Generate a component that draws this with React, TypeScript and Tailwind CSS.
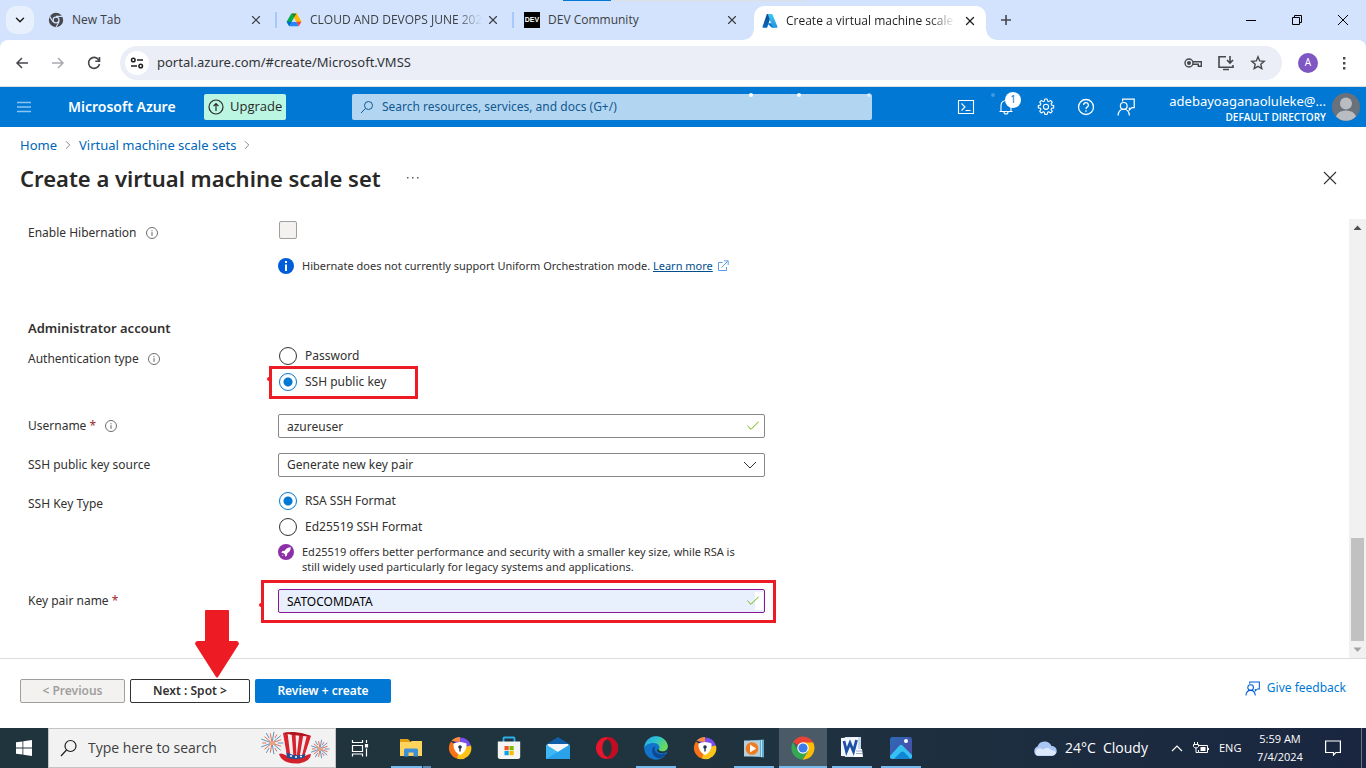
import type { ReactNode } from "react";
import { Check, ChevronDown, ChevronRight, X } from "lucide-react";

const tabs = [
  { title: "New Tab", icon: <ChromeMono />, style: "w-[229px] border-r-2" },
  { title: "CLOUD AND DEVOPS JUNE 2024", icon: <DriveLogo />, style: "w-[237px] border-r-2 pl-[9px]" },
  { title: "DEV Community", icon: <DevLogo />, style: "w-[237px] pl-[10px]" },
];

const taskbarApps = [
  { name: "File Explorer", icon: <FolderIcon />, state: "stacked" },
  { name: "Secure Browser", icon: <SecureIcon />, state: "closed" },
  { name: "Microsoft Store", icon: <StoreIcon />, state: "closed" },
  { name: "Mail", icon: <MailIcon />, state: "closed" },
  { name: "Opera", icon: <OperaIcon />, state: "closed" },
  { name: "Edge", icon: <EdgeIcon />, state: "open" },
  { name: "Secure Browser 2", icon: <SecureIcon />, state: "closed" },
  { name: "Media Player", icon: <MediaIcon />, state: "open" },
  { name: "Chrome", icon: <ChromeIcon />, state: "active" },
  { name: "Word", icon: <WordIcon />, state: "open" },
  { name: "Photos", icon: <PhotosIcon />, state: "open" },
];

function ChromeMono() {
  return (
    <svg viewBox="0 0 16 16" className="size-4">
      <circle cx="8" cy="8" r="7.2" fill="#45484c" />
      <circle cx="8" cy="8" r="3.6" fill="#d3e3fd" />
      <circle cx="8" cy="8" r="2.3" fill="#45484c" />
      <path d="M8 4.4h6.4M4.9 9.8 1.7 4.4M11.1 9.8 7.9 15.2" stroke="#d3e3fd" strokeWidth="1.1" />
    </svg>
  );
}

function DriveLogo() {
  return (
    <svg viewBox="0 0 16 16" className="size-4">
      <path d="M10.6 1.5 15.4 9.8h-5.2L5.4 1.5z" fill="#ffba00" />
      <path d="M5.4 1.5h5.2L8 6z" fill="#188038" />
      <path d="M5.4 1.5 8 6l-2.2 3.8L3.3 14.2.6 9.8z" fill="#00ac47" />
      <path d="M8 6l2.600-4.500L15.400 9.800h-5.200z" fill="#ffba00" />
      <path d="M.6 9.8h5.2l-2.5 4.4z" fill="#0066da" />
      <path d="M5.8 9.8h4.400l2.500 4.400H3.300z" fill="#2684fc" />
      <path d="M10.2 9.8h5.200l-2.700 4.400z" fill="#ea4335" />
      <path d="M5.8 9.8 8 6l2.200 3.800z" fill="#d3e3fd" />
    </svg>
  );
}

function DevLogo() {
  return (
    <span className="grid size-4 place-items-center bg-black font-['Liberation_Sans',sans-serif] text-[7px] font-bold text-white">
      DEV
    </span>
  );
}

function AzureLogo() {
  return (
    <svg viewBox="0 0 16 16" className="size-4">
      <defs>
        <linearGradient id="az1" x1="0" y1="0" x2="0" y2="1">
          <stop offset="0" stopColor="#114a8b" />
          <stop offset="1" stopColor="#0669bc" />
        </linearGradient>
        <linearGradient id="az2" x1="0" y1="0" x2="0" y2="1">
          <stop offset="0" stopColor="#3ccbf4" />
          <stop offset="1" stopColor="#2892df" />
        </linearGradient>
      </defs>
      <path d="M5.5 1h4.2L5.3 14.2a.9.9 0 0 1-.8.6H1.3a.9.9 0 0 1-.8-1.1L4.7 1.6A.9.9 0 0 1 5.5 1z" fill="url(#az1)" />
      <path d="M11.8 10.2H5.2l4.4 4.4h3z" fill="#0078d4" />
      <path d="M10.5 1.6A.9.9 0 0 0 9.7 1H5.8l4.5 13.1c.1.4-.2.7-.6.7h5c.6 0 1-.6.8-1.1z" fill="url(#az2)" />
    </svg>
  );
}

function FolderIcon() {
  return (
    <svg viewBox="0 0 24 24" className="size-6">
      <path d="M1 3h8l2 2v3H1z" fill="#e0a010" />
      <path d="M1 6h10l2-1h10v15H1z" fill="#ffd35c" />
      <path d="M5 20.500v-6.500q0-1.500 1.500-1.500h11q1.500 0 1.500 1.500v6.500h-4.500v-4h-5v4z" fill="#3c8fd8" />
    </svg>
  );
}

function SecureIcon() {
  return (
    <svg viewBox="0 0 24 24" className="size-6">
      <path d="M12 12 3 5.500A11 11 0 0 0 10 22.800z" fill="#f97316" />
      <path d="M12 12 5 4a11 11 0 0 1 17.900 6.500z" fill="#7a4fee" />
      <path d="M12 12l11-2.500A11 11 0 0 1 9 22.600z" fill="#fcc419" />
      <path d="M3.500 5A11 11 0 0 1 12 1v5z" fill="#fb8a3c" />
      <path d="M5.500 7.500q6.500-3 13 0c.5 6-2.500 9.500-6.500 11.500-4-2-7-5.500-6.500-11.500z" fill="#fff" />
      <circle cx="12" cy="11" r="1.800" fill="#27324a" />
      <path d="M11.300 12h1.400v3.500h-1.400z" fill="#27324a" />
    </svg>
  );
}

function StoreIcon() {
  return (
    <svg viewBox="0 0 24 24" className="size-6">
      <path d="M6.500 6V2.200q0-.7.700-.7h9.600q.7 0 .7.700V6" fill="none" stroke="#2bb0ea" strokeWidth="1.800" />
      <path d="M.8 5.500h22.400v15q0 2.500-2.500 2.500H3.300Q.8 23 .8 20.500z" fill="#f4f4f4" />
      <path d="M7.500 10h4.200v4.200H7.500z" fill="#f25022" />
      <path d="M12.500 10h4.200v4.200h-4.200z" fill="#7fba00" />
      <path d="M7.500 15h4.200v4.200H7.500z" fill="#00a4ef" />
      <path d="M12.500 15h4.200v4.200h-4.200z" fill="#ffb900" />
    </svg>
  );
}

function MailIcon() {
  return (
    <svg viewBox="0 0 24 24" className="size-6">
      <path d="M0 8.500 12 1l12 7.500z" fill="#0f5ea8" />
      <path d="M1.500 8h21v8h-21z" fill="#f3f6fa" />
      <path d="M0 8.500 12 16 24 8.500V23H0z" fill="#3db8f5" />
      <path d="M24 8.500V23H0z" fill="#1a8fe0" opacity=".55" />
    </svg>
  );
}

function OperaIcon() {
  return (
    <svg viewBox="0 0 24 24" className="size-6">
      <circle cx="12" cy="12" r="11" fill="#e8152c" />
      <path d="M12 1a11 11 0 0 1 0 22z" fill="#c00d22" />
      <ellipse cx="12" cy="12" rx="4.600" ry="8.600" fill="#22343c" />
    </svg>
  );
}

function EdgeIcon() {
  return (
    <svg viewBox="0 0 24 24" className="size-6">
      <defs>
        <linearGradient id="edgeTop" x1="0" y1="0" x2="1" y2="0.500">
          <stop offset="0" stopColor="#2aa5e0" />
          <stop offset="0.500" stopColor="#2cc3d2" />
          <stop offset="1" stopColor="#6bdc53" />
        </linearGradient>
      </defs>
      <circle cx="12" cy="12" r="11.800" fill="#1173c9" />
      <path d="M.3 12C.5 5 6 .2 12 .2S23.800 5 23.800 10c0 3.500-2.600 5.500-5.500 5.500-2.500 0-4-.8-3.300-2 1.800-3-1-6.500-5.500-6.500C4.500 7 1 9.500.3 12z" fill="url(#edgeTop)" />
      <path d="M8.500 12.500c-1.500 5 2 9.500 7 9.800 3-.5 5.500-2.500 7-5-4 2-11 1.200-11.800-3.500-.2-1.200.2-2.500 1-3.300-1.500 0-2.700.8-3.200 2z" fill="#0d4a93" />
      <path d="M23.200 15.500c-3 2.500-8 2.300-10-.2 0-1 0-1.500.5-2.500 1 2 3 2.700 5 2.700 2.500 0 4.600-1.500 5-3.500z" fill="#22343c" />
    </svg>
  );
}

function MediaIcon() {
  return (
    <svg viewBox="0 0 24 24" className="size-6">
      <path d="M8 4.500 22 3.500v18L8 20z" fill="#5fa9cf" />
      <path d="M19 4h1v17h-1z" fill="#c5e4f2" />
      <path d="M2 4.500h16v16H2z" fill="#b5cfdd" />
      <circle cx="10" cy="12.500" r="6.300" fill="#f07a1e" />
      <path d="M8 8.500v8l6.200-4z" fill="#fff" />
    </svg>
  );
}

function ChromeIcon() {
  return (
    <svg viewBox="0 0 24 24" className="size-6">
      <path d="M12 12 2 6a11.800 11.800 0 0 1 20.200.5z" fill="#ea4335" />
      <path d="M2 6l5 9 5 2.500-.5 6.200A11.800 11.800 0 0 1 2 6z" fill="#34a853" />
      <path d="M17 15l-5.500 8.700A11.800 11.800 0 0 0 22.200 6.500H12z" fill="#fbbc04" />
      <path d="M7 15l5 2.500 5-2.500-5.500 8.700z" fill="#34a853" />
      <circle cx="12" cy="12" r="5.800" fill="#fff" />
      <circle cx="12" cy="12" r="4.600" fill="#3b7ded" />
    </svg>
  );
}

function WordIcon() {
  return (
    <svg viewBox="0 0 24 24" className="size-6">
      <path d="M5 1h16v20H5z" fill="#c9d9ee" />
      <path d="M1 2l17-1v20L1 20z" fill="#f3f7fd" />
      <path d="M14 13h8l1 8h-9z" fill="#fff" />
      <path d="M16 15h6M16 17.500h6" stroke="#8ea9d6" strokeWidth="1" />
      <path d="M4 5l2.500 10.500L10 7l3.500 8.500L16.500 4" fill="none" stroke="#1d51a5" strokeWidth="2.800" />
    </svg>
  );
}

function PhotosIcon() {
  return (
    <svg viewBox="0 0 24 24" className="size-6">
      <defs>
        <linearGradient id="photoSky" x1="0" y1="0" x2="1" y2="1">
          <stop offset="0" stopColor="#2b6cb8" />
          <stop offset="1" stopColor="#5145a5" />
        </linearGradient>
      </defs>
      <rect x="1" y="1" width="22" height="22" rx="2.500" fill="url(#photoSky)" />
      <path d="M1 20 10.500 9.500q1.500-1.300 3 0L23 19v1.500q0 2.500-2.500 2.500h-17Q1 23 1 20.500z" fill="#35c1f1" />
      <path d="M5 23l7-7q1.500-1 3 0l6.500 6.700-1 .3z" fill="#0f87d6" />
      <circle cx="17" cy="5" r="2" fill="#fff" />
    </svg>
  );
}

function Firework({ cx, cy, r }: { cx: number; cy: number; r: number }) {
  const rays = Array.from({ length: 18 }, (_, i) => i);
  return (
    <g strokeWidth="0.900" strokeLinecap="round">
      {rays.map((i) => {
        const angle = (i * Math.PI) / 9;
        const outer = i % 2 ? r * 0.85 : r;
        const inner = i % 3 === 0 ? r * 0.55 : r * 0.2;
        return (
          <line
            key={i}
            x1={cx + Math.cos(angle) * inner}
            y1={cy + Math.sin(angle) * inner}
            x2={cx + Math.cos(angle) * outer}
            y2={cy + Math.sin(angle) * outer}
            stroke={i % 2 ? "#e2603f" : "#4f86b8"}
          />
        );
      })}
      <circle cx={cx} cy={cy} r={r * 0.2} fill="#f0a07a" />
    </g>
  );
}

function HatIcon() {
  return (
    <svg viewBox="0 0 72 34" className="mr-1 h-[34px] w-[72px]">
      <Firework cx={13} cy={12} r={11} />
      <Firework cx={61} cy={18} r={9} />
      <path d="M20 23q2-1 4 0 9 5 22 2 3-2 6-2 0 7-12 9.500Q23 33 20 23z" fill="#d3212c" />
      <path d="M24 2q12-3 28 3l-7 21q-9 3-17-1z" fill="#f4eef0" />
      <path d="M24 2l4.500-.5 3 25L28 25zM32.500 1l4 .3 1 26-3-.3zM40.500 1.800l4 .9-4 24-3 .3zM48 3.700l4 1.300-7 21-2.500.8z" fill="#d7232f" />
      <path d="M24 2q12-3 28 3-14 1-28-3z" fill="#b3151f" />
      <path d="M27.500 21.500q9 4.500 19 1.500l-1 3.500q-9 3.500-17.500 0z" fill="#1f4f96" />
      <path d="M31 25h2M36 26h2M41 25.500h2" stroke="#fff" strokeWidth="1.500" />
    </svg>
  );
}

function Feedback({ className }: { className: string }) {
  return (
    <svg viewBox="0 0 16 16" className={className} fill="none" stroke="currentColor" strokeWidth="1.100">
      <path d="M5 3V1h10.300v7.500h-2l-2.300 2V8.500" />
      <circle cx="6" cy="7" r="3" />
      <path d="M1 15.500C1.200 12 3 10 6 10s4.800 2 5 5.500" />
    </svg>
  );
}

function Gear() {
  return (
    <svg viewBox="0 0 18 18" className="size-[18px]" fill="none" stroke="currentColor" strokeWidth="1.100" strokeLinejoin="round">
      <path d="M7.800 1h2.400l.4 2.100 1.200.5 1.800-1.200 1.700 1.700-1.200 1.800.5 1.200 2.100.4v2.400l-2.100.4-.5 1.200 1.200 1.800-1.700 1.700-1.800-1.200-1.200.5-.4 2.100H7.800l-.4-2.100-1.200-.5-1.800 1.200-1.700-1.700 1.200-1.800-.5-1.200L1.300 9.900V7.500l2.100-.4.500-1.200-1.200-1.800 1.700-1.700 1.800 1.200 1.200-.5z" />
      <circle cx="9" cy="8.800" r="2.600" />
    </svg>
  );
}

function InfoDot() {
  return (
    <svg viewBox="0 0 12 12" className="size-3 text-[#605e5c]" fill="none" stroke="currentColor">
      <circle cx="6" cy="6" r="5.500" strokeWidth="0.900" />
      <path d="M6 5.200v3.600M6 3.200v1.100" strokeWidth="1" />
    </svg>
  );
}

function Label({ id, required, info, children }: { id?: string; required?: boolean; info?: boolean; children: ReactNode }) {
  return (
    <div className="flex w-[250px] shrink-0 items-center gap-[9px] leading-5">
      <label htmlFor={id}>
        {children}
        {required && <span className="text-[#a4262c]"> *</span>}
      </label>
      {info && <InfoDot />}
    </div>
  );
}

function Radio({ name, label, checked }: { name: string; label: string; checked?: boolean }) {
  return (
    <label className="flex h-5 items-center gap-2">
      <input
        type="radio"
        name={name}
        defaultChecked={checked}
        className="ml-px size-[18px] appearance-none rounded-full border border-[#323130] bg-white checked:border-[#0078d4] checked:bg-[radial-gradient(circle,#0078d4_4px,white_5px)]"
      />
      {label}
    </label>
  );
}

function TextField({ id, value, className, filled }: { id: string; value: string; className: string; filled?: boolean }) {
  return (
    <div className="relative">
      <input id={id} defaultValue={value} className={`block h-6 w-full rounded-xs border px-2 outline-none ${className}`} />
      {filled && <span className="absolute top-[3px] right-0.5 h-[18px] w-2 bg-white" />}
      <Check className="absolute top-1 right-1 size-4 text-[#6bb700]" strokeWidth={1.5} />
    </div>
  );
}

function BrowserTabs() {
  return (
    <div className="relative flex h-10 items-center bg-[#d3e3fd] pl-[6px] font-['Open_Sans',sans-serif] text-[#3c4043]">
      <div className="absolute top-0 left-[563px] h-px w-12 bg-[#0078d4]" />
      <div className="absolute top-0 left-[611px] h-px w-[193px] bg-[#dcdfe4]" />
      <button aria-label="Search tabs" className="grid size-7 place-items-center rounded-[10px] bg-[#e9f0fd] text-[#1f1f1f]">
        <ChevronDown className="size-3.5" strokeWidth={2.5} />
      </button>
      <div className="flex pl-[14px]">
        {tabs.map((tab, i) => (
          <div key={tab.title} className={`flex h-4 items-center border-[#a8c7fa] ${tab.style}`}>
            {tab.icon}
            <span className={`ml-2 flex-1 overflow-hidden whitespace-nowrap leading-5 ${i === 1 ? "mask-r-from-85%" : ""}`}>{tab.title}</span>
            <button aria-label={`Close ${tab.title}`} className="mr-3 ml-1">
              <X className="size-3.5" strokeWidth={2} />
            </button>
          </div>
        ))}
      </div>
      <div className="relative mt-[6px] ml-[3px] flex h-[34px] w-[232px] items-center rounded-t-[10px] bg-white pr-[9px] pb-1 pl-2 text-[#1f1f1f]">
        <span className="absolute bottom-0 -left-[10px] size-[10px] bg-[radial-gradient(circle_at_0_0,transparent_9px,white_10px)]" />
        <span className="absolute -right-[10px] bottom-0 size-[10px] bg-[radial-gradient(circle_at_100%_0,transparent_9px,white_10px)]" />
        <AzureLogo />
        <span className="ml-2 flex-1 overflow-hidden mask-r-from-85% whitespace-nowrap leading-5">Create a virtual machine scale set</span>
        <button aria-label="Close Azure" className="ml-2">
          <X className="size-3.5" strokeWidth={2.250} />
        </button>
      </div>
      <button aria-label="New tab" className="ml-3">
        <svg viewBox="0 0 16 16" className="size-4" stroke="#45484c" strokeWidth="1.600">
          <path d="M8 3v10M3 8h10" />
        </svg>
      </button>
      <div className="ml-auto flex items-center gap-8 pr-[17px] text-black">
        <button aria-label="Minimize">
          <svg viewBox="0 0 12 12" className="size-3" stroke="currentColor">
            <path d="M1 6.500h10" />
          </svg>
        </button>
        <button aria-label="Restore" className="mx-0.5">
          <svg viewBox="0 0 12 12" className="size-3" fill="none" stroke="currentColor">
            <path d="M1.500 3.500h7v7h-7zM3.500 3.500v-2h7v7h-2" />
          </svg>
        </button>
        <button aria-label="Close window">
          <svg viewBox="0 0 12 12" className="size-3" stroke="currentColor">
            <path d="M1 1l10 10M11 1L1 11" />
          </svg>
        </button>
      </div>
    </div>
  );
}

function Toolbar() {
  return (
    <div className="bg-[#d3e3fd]">
      <div className="flex h-[47px] items-center rounded-t-lg border-b border-[#dadce0] bg-white pl-[14px] text-[#45484c]">
        <div className="flex gap-5">
          {["M14 8H3M8 3 3 8l5 5", "M2 8h11M8 3l5 5-5 5"].map((d, i) => (
            <button key={d} aria-label={i === 0 ? "Back" : "Forward"} className={i === 0 ? "" : "text-[#a9abae]"}>
              <svg viewBox="0 0 16 16" className="size-4" fill="none" stroke="currentColor" strokeWidth="1.500">
                <path d={d} />
              </svg>
            </button>
          ))}
          <button aria-label="Reload">
            <svg viewBox="0 0 16 16" className="size-4" fill="none" stroke="currentColor" strokeWidth="1.600">
              <path d="M12.800 5A5.500 5.500 0 1 0 13.500 9M13.500 2v4.200H9.300" />
            </svg>
          </button>
        </div>
        <div className="ml-[18px] flex h-[34px] flex-1 items-center rounded-full bg-[#ebeef7] pr-4 pl-[5px]">
          <span className="grid size-6 place-items-center rounded-full bg-white">
            <svg viewBox="0 0 16 16" className="size-4" fill="none" stroke="#1f1f1f" strokeWidth="1.500">
              <circle cx="4.300" cy="5" r="1.800" />
              <circle cx="11.700" cy="11" r="1.800" />
              <path d="M8 5h6M2 11h6" />
            </svg>
          </span>
          <input
            aria-label="Address"
            defaultValue="portal.azure.com/#create/Microsoft.VMSS"
            className="ml-2 flex-1 text-[13px] text-[#303438] outline-none"
          />
          <div className="flex items-center gap-[15px]">
            <svg viewBox="0 0 18 16" className="h-4 w-[18px]" fill="none" stroke="currentColor" strokeWidth="1.400">
              <circle cx="5" cy="8" r="4" />
              <circle cx="5" cy="8" r="1.300" fill="currentColor" />
              <path d="M9 6.700h8.300v4.500h-3V9.300H9" />
            </svg>
            <svg viewBox="0 0 18 16" className="h-4 w-[18px]" fill="none" stroke="currentColor" strokeWidth="1.600">
              <path d="M9 1.800H2v10.400h14V10M6 14.500h6M13 1v6.500M10 5l3 3 3-3" />
            </svg>
            <svg viewBox="0 0 16 16" className="size-4" fill="none" stroke="currentColor" strokeWidth="1.400">
              <path d="M8 1.800l1.700 4.100 4.500.4-3.400 2.900 1 4.400L8 11.300l-3.800 2.300 1-4.400L1.800 6.300l4.500-.4z" />
            </svg>
          </div>
        </div>
        <span className="ml-4 grid size-5 place-items-center rounded-full bg-[#7e57c2] text-[10px] text-white">A</span>
        <button aria-label="Menu" className="mr-[14px] ml-[18px]">
          <svg viewBox="0 0 16 16" className="size-4" fill="currentColor">
            <path d="M7 2h2.400v2.400H7zM7 7h2.400v2.400H7zM7 12h2.400v2.400H7z" />
          </svg>
        </button>
      </div>
    </div>
  );
}

function AzureHeader() {
  return (
    <header className="relative flex h-10 items-center bg-[#0078d4] text-white">
      <button aria-label="Portal menu" className="ml-[17px]">
        <svg viewBox="0 0 14 12" className="h-3 w-3.5" stroke="#8cc4f0" strokeWidth="1.500">
          <path d="M0 1.500h14M0 6h14M0 10.500h14" />
        </svg>
      </button>
      <a href="#home" className="ml-[37px] w-[120px] text-sm font-semibold whitespace-nowrap">Microsoft Azure</a>
      <button className="ml-4 flex h-[26px] w-[82px] items-center gap-1.5 rounded-xs bg-[#bbf6e3] pl-1 font-['Open_Sans',sans-serif] text-[13px] text-[#292827]">
        <svg viewBox="0 0 16 16" className="size-4" fill="none" stroke="currentColor" strokeWidth="1.200">
          <circle cx="8" cy="8" r="7" />
          <path d="M8 12V5M5.500 7.200 8 4.700l2.500 2.500" />
        </svg>
        Upgrade
      </button>
      <div className="ml-[66px] flex h-[26px] w-[520px] items-center rounded-xs bg-[#b2d6f2] pl-2 text-[#12588f]">
        <svg viewBox="0 0 14 14" className="size-3.5" fill="none" stroke="currentColor" strokeWidth="1">
          <circle cx="8.500" cy="5.500" r="4" />
          <path d="M5.500 8.500 1 13" />
        </svg>
        <input
          aria-label="Search"
          placeholder="Search resources, services, and docs (G+/)"
          className="ml-2 flex-1 outline-none placeholder:text-[#12588f]"
        />
      </div>
      <span className="absolute top-1.5 left-[749px] size-1 rounded-full bg-white" />
      <span className="absolute top-1.5 left-[797px] size-1 rounded-full bg-white/90" />
      <span className="absolute top-1.5 left-[867px] size-1 rounded-full bg-white/50" />
      <span className="absolute top-1.5 left-[991px] size-1 rounded-full bg-white/25" />
      <div className="ml-auto flex items-center gap-[22px]">
        <button aria-label="Cloud Shell">
          <svg viewBox="0 0 18 18" className="size-[18px]" fill="none" stroke="currentColor" strokeWidth="1.100">
            <path d="M1.500 2.500h15v13h-15zM4.500 5.500 8 9l-3.500 3.500M8.500 12.500h5" />
          </svg>
        </button>
        <button aria-label="Notifications" className="relative">
          <svg viewBox="0 0 18 18" className="size-[18px]" fill="none" stroke="currentColor" strokeWidth="1.100">
            <path d="M4 13.500V7.500a5 5 0 0 1 10 0v6M2.500 13.500h13M7 14a2 2 0 0 0 4 0" />
          </svg>
          <span className="absolute -top-[6px] left-2 grid size-4 place-items-center rounded-full bg-white text-[10px] text-[#0078d4]">1</span>
        </button>
        <button aria-label="Settings">
          <Gear />
        </button>
        <button aria-label="Help">
          <svg viewBox="0 0 18 18" className="size-[18px]" fill="none" stroke="currentColor" strokeWidth="1.300">
            <circle cx="9" cy="9" r="7.500" />
            <path d="M6.600 7a2.400 2.400 0 1 1 3.600 2.100c-.8.500-1.200.9-1.200 1.900M9 12.200v1.500" />
          </svg>
        </button>
        <button aria-label="Feedback">
          <Feedback className="size-[18px]" />
        </button>
      </div>
      <div className="ml-[29px] w-[162px] pt-1 text-right">
        <p className="text-[13px] leading-4 whitespace-nowrap">adebayoaganaoluleke@...</p>
        <p className="font-['Open_Sans',sans-serif] text-[10px] leading-4 font-semibold">DEFAULT DIRECTORY</p>
      </div>
      <svg viewBox="0 0 28 28" className="mr-1.5 ml-1.5 size-7">
        <circle cx="14" cy="14" r="14" fill="#69717b" />
        <circle cx="14" cy="10.500" r="6" fill="#b9bdc1" />
        <path d="M4 23.500Q6 17.500 14 17.500T24 23.500A14 14 0 0 1 4 23.500z" fill="#b9bdc1" />
      </svg>
    </header>
  );
}

function PageHeading() {
  return (
    <div className="px-5 pt-[9px]">
      <nav className="flex items-center gap-1 text-[13px] leading-[18px] text-[#0067b8]">
        <a href="#home">Home</a>
        <ChevronRight className="size-3.5 text-[#605e5c]" strokeWidth={1.250} />
        <a href="#scale-sets">Virtual machine scale sets</a>
        <ChevronRight className="size-3.5 text-[#605e5c]" strokeWidth={1.250} />
      </nav>
      <div className="flex items-center pt-2 pb-[25px]">
        <h1 className="text-[22px] leading-8 font-semibold whitespace-nowrap text-[#292827]">Create a virtual machine scale set</h1>
        <button aria-label="More" className="ml-[26px]">
          <svg viewBox="0 0 12 4" className="h-1 w-3" fill="#605e5c">
            <path d="M0 1h1.500v1.500H0zM5 1h1.500v1.500H5zM10 1h1.500v1.500H10z" />
          </svg>
        </button>
        <button aria-label="Close blade" className="mr-[9px] ml-auto">
          <svg viewBox="0 0 14 14" className="size-3.5" stroke="#323130" strokeWidth="1.100">
            <path d="M1 1l12 12M13 1 1 13" />
          </svg>
        </button>
      </div>
    </div>
  );
}

function AdminForm() {
  return (
    <form className="min-w-0 flex-1 pl-7">
      <div className="flex">
        <div className="pt-1">
          <Label id="hibernate" info>Enable Hibernation</Label>
        </div>
        <div className="pt-0.5">
          <input id="hibernate" type="checkbox" disabled className="ml-px block size-[18px] appearance-none rounded-xs border border-[#a19f9d] bg-[#f3f2f1]" />
          <p className="mt-[19px] flex items-center gap-2 text-[11px] leading-4">
            <svg viewBox="0 0 16 16" className="size-4">
              <circle cx="8" cy="8" r="8" fill="#015cda" />
              <path d="M7 6.500h2V13H7zM7 3h2v2H7z" fill="#fff" />
            </svg>
            <span>
              Hibernate does not currently support Uniform Orchestration mode.{" "}
              <a href="#learn" className="text-[#004e8c] underline">Learn more</a>
            </span>
            <svg viewBox="0 0 12 12" className="-ml-1 size-3" fill="none" stroke="#4a90e2" strokeWidth="0.900">
              <path d="M5.500 2.500h-4v8h8V7M4.500 7.500l6-6M7 .8h4.200V5" />
            </svg>
          </p>
        </div>
      </div>

      <h2 className="mt-11 text-[13px] leading-5 font-semibold">Administrator account</h2>
      <div className="mt-2 flex">
        <div className="pt-[3px]">
          <Label info>Authentication type</Label>
        </div>
        <div className="flex flex-col gap-1.5">
          <Radio name="auth" label="Password" />
          <div className="relative">
            <Radio name="auth" label="SSH public key" checked />
            <div className="pointer-events-none absolute -top-[6px] -left-[9px] h-[33px] w-[149px] border-3 border-[#ed1c24]" />
            <span className="absolute top-[5px] -left-[11px] size-1 rounded-full bg-[#ed1c24]" />
          </div>
        </div>
      </div>

      <div className="mt-[22px] flex items-center">
        <Label id="username" required info>Username</Label>
        <div className="w-[487px]">
          <TextField id="username" value="azureuser" className="border-[#8a8886] bg-white" />
        </div>
      </div>

      <div className="mt-[15px] flex items-center">
        <Label id="source">SSH public key source</Label>
        <div className="relative w-[487px]">
          <select id="source" className="block h-6 w-full appearance-none rounded-xs border border-[#8a8886] bg-white px-2">
            <option>Generate new key pair</option>
          </select>
          <svg viewBox="0 0 14 8" className="pointer-events-none absolute top-2 right-2 h-2 w-3.5" fill="none" stroke="#323130">
            <path d="M1 1l6 6 6-6" />
          </svg>
        </div>
      </div>

      <div className="mt-3.5 flex">
        <div className="pt-[3px]">
          <Label>SSH Key Type</Label>
        </div>
        <div className="w-[487px]">
          <div className="flex flex-col gap-1.5">
            <Radio name="format" label="RSA SSH Format" checked />
            <Radio name="format" label="Ed25519 SSH Format" />
          </div>
          <div className="mt-[7px] flex gap-2 text-[11px] leading-[15px]">
            <svg viewBox="0 0 16 16" className="size-4 shrink-0">
              <circle cx="8" cy="8" r="8" fill="#8c2fa8" />
              <path d="M12.800 3.200c-3 0-5 1.500-6 3.500L4.500 7 3.200 8.800l2.200.2 1.600 1.600.2 2.200L9 11.500l.3-2.300c2-1 3.500-3 3.500-6zM5 10.500 3.500 12.500 5.500 11z" fill="#fff" />
            </svg>
            <p className="whitespace-nowrap">
              Ed25519 offers better performance and security with a smaller key size, while RSA is
              <br />
              still widely used particularly for legacy systems and applications.
            </p>
          </div>
        </div>
      </div>

      <div className="mt-[15px] flex items-center">
        <Label id="keypair" required>Key pair name</Label>
        <div className="relative w-[487px]">
          <TextField id="keypair" value="SATOCOMDATA" className="border-[#881798] bg-[#e8f0fe] text-black" filled />
          <div className="pointer-events-none absolute -top-[9px] -right-[11px] -bottom-[10px] -left-[17px] border-3 border-[#ed1c24]" />
          <span className="absolute top-3.5 -left-[19px] size-1 rounded-full bg-[#ed1c24]" />
        </div>
      </div>
    </form>
  );
}

function Scrollbar() {
  return (
    <div className="flex w-[17px] flex-col items-center bg-[#f1f1f1]">
      <svg viewBox="0 0 17 17" className="size-[17px]" fill="#505050">
        <path d="M4.500 11 8.500 6.500 12.500 11z" />
      </svg>
      <div className="flex-1" />
      <div className="h-[103px] w-[13px] bg-[#c1c1c1]" />
      <svg viewBox="0 0 17 17" className="size-[17px]" fill="#a3a3a3">
        <path d="M4.500 6.500 8.500 11l4-4.500z" />
      </svg>
    </div>
  );
}

function FormFooter() {
  return (
    <footer className="flex h-[70px] items-start border-t border-[#dcdcdc] px-5 pt-5 text-xs font-semibold">
      <button disabled className="h-6 w-[105px] rounded-xs border border-[#a19f9d] bg-[#f3f2f1] text-[#a19f9d]">&lt; Previous</button>
      <div className="relative ml-[5px]">
        <button className="h-6 w-[120px] rounded-xs border border-[#323130] bg-white text-[#323130]">Next : Spot &gt;</button>
        <svg viewBox="0 0 44 68" className="pointer-events-none absolute bottom-[25px] left-[65px] h-[68px] w-11" fill="#ed1c24">
          <path d="M11 0h22q1 0 1 1v30h8q2 1 2 3L23 67q-1 1-2 0L0 34q0-2 2-3h8V1q0-1 1-1z" />
        </svg>
      </div>
      <button className="ml-[5px] h-6 w-[136px] rounded-xs bg-[#0078d4] text-white">Review + create</button>
      <a href="#feedback" className="ml-auto flex items-center gap-[7px] text-xs leading-[18px] font-normal text-[#0078d4]">
        <Feedback className="size-[15px] text-[#015cda]" />
        Give feedback
      </a>
    </footer>
  );
}

function Taskbar() {
  return (
    <div className="flex h-10 items-stretch bg-linear-to-r from-[#20343d] via-[#20343f] to-[#1a2640] font-['Open_Sans',sans-serif] text-white">
      <button aria-label="Start" className="grid w-12 place-items-center">
        <svg viewBox="0 0 16 16" className="size-4" fill="#fff">
          <path d="M0 2.300 6.500 1.400v6.200H0zM7.300 1.300 16 0v7.600H7.300zM0 8.400h6.500v6.200L0 13.700zM7.300 8.400H16V16l-8.700-1.300z" />
        </svg>
      </button>
      <div className="flex w-72 items-center border border-[#c4c4c4] bg-[#f2f2f2] pl-[11px] text-[#303030]">
        <svg viewBox="0 0 18 18" className="size-[18px]" fill="none" stroke="#1f1f1f" strokeWidth="1.200">
          <circle cx="10.500" cy="7" r="5.500" />
          <path d="M6.500 11 1 17" />
        </svg>
        <input aria-label="Taskbar search" placeholder="Type here to search" className="ml-2.5 min-w-0 flex-1 text-sm outline-none placeholder:text-[#404040]" />
        <HatIcon />
      </div>
      <button aria-label="Task View" className="grid w-12 place-items-center">
        <svg viewBox="0 0 18 18" className="size-[18px]" fill="none" stroke="#fff" strokeWidth="1.200">
          <path d="M1.500 1v2.500h10V1M1.500 6.500h10v6h-10zM1.500 17.500v-2.500h10v2.500M15.500 1v3M15.500 9.500v8" />
          <path d="M14.500 5.500h2v2.500h-2z" fill="#fff" />
        </svg>
      </button>
      <div className="ml-[3px] flex gap-px">
        {taskbarApps.map((app) => (
          <button key={app.name} aria-label={app.name} className={`flex w-12 flex-col items-center pt-2 ${app.state === "active" ? "bg-[#4a5a66]" : ""}`}>
            {app.icon}
            {app.state === "stacked" && (
              <span className="mt-auto flex h-0.5 w-10 gap-px">
                <span className="flex-1 bg-[#76b9ed]" />
                <span className="w-2 bg-[#5a8bb5]" />
              </span>
            )}
            {app.state === "open" && <span className="mt-auto h-0.5 w-10 bg-[#76b9ed]" />}
            {app.state === "active" && <span className="mt-auto h-0.5 w-full bg-[#76b9ed]" />}
          </button>
        ))}
      </div>
      <div className="ml-auto flex items-center text-sm">
        <svg viewBox="0 0 24 16" className="mr-2 h-4 w-6">
          <path d="M5 16a5 5 0 0 1-.5-9.500A7.500 7.500 0 0 1 18.500 6 5 5 0 0 1 19 16z" fill="#a9c6f5" />
          <path d="M4 15.500a4 4 0 0 1 1-7q3-1 5 1 5-3.500 8 .5 4 0 5 2.500-1 3-4 3z" fill="#dce9fd" />
        </svg>
        <span className="w-8 whitespace-nowrap">24°C</span>
        <span className="ml-1.5 w-[45px] whitespace-nowrap">Cloudy</span>
        <svg viewBox="0 0 12 8" className="ml-[23px] h-2 w-3" fill="none" stroke="#fff" strokeWidth="1.200">
          <path d="M1 7l5-5 5 5" />
        </svg>
        <svg viewBox="0 0 16 12" className="ml-[10px] h-3 w-4" fill="none" stroke="#fff">
          <path d="M6 3.500h8.500v7h-9V8M15.500 6v2M1.500 0v2.500M4.500 0v2.500M.5 2.500h5v2q-1 1.500-2.500 1.500T.5 4.500zM3 6v4.500h2" />
          <path d="M7.500 5h5v4h-5z" fill="#fff" stroke="none" />
        </svg>
        <span className="ml-[10px] w-6 text-[11px]">ENG</span>
        <div className="ml-[13px] w-12 text-center text-[11px] leading-[18px] whitespace-nowrap">
          <p>5:59 AM</p>
          <p>7/4/2024</p>
        </div>
        <svg viewBox="0 0 16 16" className="mr-5 ml-[21px] size-4" fill="none" stroke="#fff" strokeWidth="1.200">
          <path d="M.6 1h14.800v11.500h-4.500L8.500 15v-2.500H.6z" />
        </svg>
        <div className="mr-1 h-10 w-px bg-[#6b7486]" />
      </div>
    </div>
  );
}

export default function App() {
  return (
    <div className="flex h-screen flex-col overflow-hidden bg-white font-['Noto_Sans','Open_Sans',sans-serif] text-xs text-[#323130]">
      <BrowserTabs />
      <Toolbar />
      <AzureHeader />
      <PageHeading />
      <main className="flex min-h-0 flex-1">
        <AdminForm />
        <Scrollbar />
      </main>
      <FormFooter />
      <Taskbar />
    </div>
  );
}
